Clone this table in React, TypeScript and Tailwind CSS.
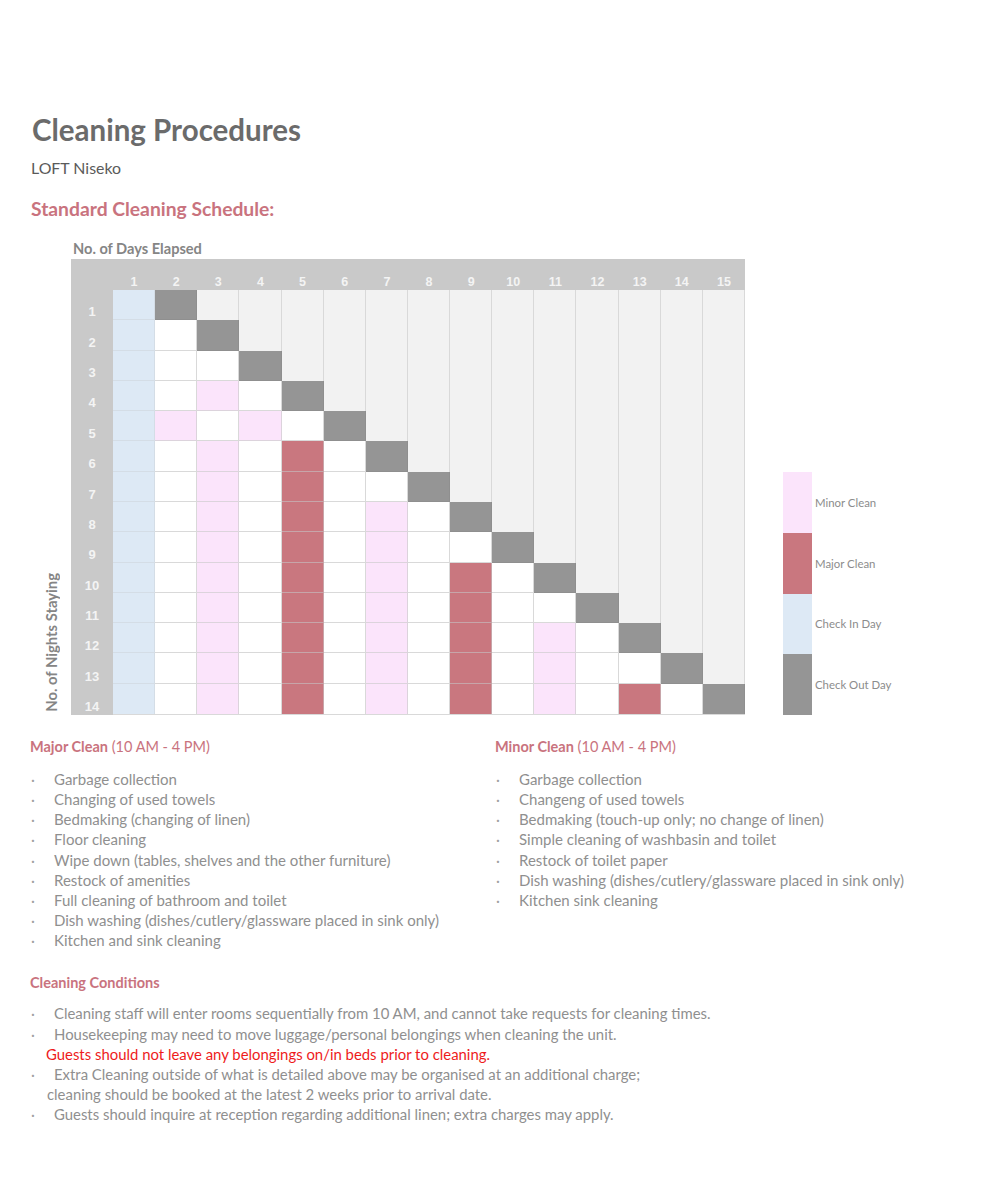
import React from "react";

type Kind = "blue" | "out" | "empty" | "white" | "pink" | "major";

const kindOf = (r: number, c: number): Kind => {
  if (c === 1) return "blue";
  if (c === r + 1) return "out";
  if (c > r + 1) return "empty";
  if (r === 5) {
    if (c === 2 || c === 4) return "pink";
    if (c === 3) return "white";
  }
  if (c === 3 && r >= 4) return "pink";
  if (c === 7 && r >= 8) return "pink";
  if (c === 11 && r >= 12) return "pink";
  if (c === 5 && r >= 6) return "major";
  if (c === 9 && r >= 10) return "major";
  if (c === 13 && r >= 14) return "major";
  return "white";
};

const cellClass: Record<Kind, string> = {
  blue: "bg-[#dde9f5] border-r border-b border-[#d4dde6]",
  out: "bg-[#959595] border-r border-b border-[#8f8f8f]",
  empty: "bg-[#f2f2f2] border-r border-[#d9d9d9]",
  white: "bg-white border-r border-b border-[#d9d9d9]",
  pink: "bg-[#fbe4fb] border-r border-b border-[#dcd3dc]",
  major: "bg-[#c9777f] border-r border-b border-[#c7a5a9]",
};

const rows = Array.from({ length: 14 }, (_, i) => i + 1);
const cols = Array.from({ length: 15 }, (_, i) => i + 1);

const majorItems = [
  "Garbage collection",
  "Changing of used towels",
  "Bedmaking (changing of linen)",
  "Floor cleaning",
  "Wipe down (tables, shelves and the other furniture)",
  "Restock of amenities",
  "Full cleaning of bathroom and toilet",
  "Dish washing (dishes/cutlery/glassware placed in sink only)",
  "Kitchen and sink cleaning",
];

const minorItems = [
  "Garbage collection",
  "Changeng of used towels",
  "Bedmaking (touch-up only; no change of linen)",
  "Simple cleaning of washbasin and toilet",
  "Restock of toilet paper",
  "Dish washing (dishes/cutlery/glassware placed in sink only)",
  "Kitchen sink cleaning",
];

function Bullet({ children }: { children: React.ReactNode }) {
  return (
    <div className="flex">
      <span className="w-[24px] shrink-0 pl-[1px] text-[#a0a0a0]">·</span>
      <span className="whitespace-nowrap">{children}</span>
    </div>
  );
}

function CleanList({ title, items }: { title: string; items: string[] }) {
  return (
    <div className="flex flex-col">
      <div className="text-[14.5px] leading-[20px] text-[#c9737e]">
        <span className="font-bold">{title}</span> (10 AM - 4 PM)
      </div>
      <div className="mt-[12px] flex flex-col text-[15px] leading-[20.15px] text-[#8f8f8f]">
        {items.map((t, i) => (
          <Bullet key={i}>{t}</Bullet>
        ))}
      </div>
    </div>
  );
}

export default function App() {
  const legend = [
    { label: "Minor Clean", cls: "bg-[#fbe4fb]" },
    { label: "Major Clean", cls: "bg-[#c9777f]" },
    { label: "Check In Day", cls: "bg-[#dde9f5]" },
    { label: "Check Out Day", cls: "bg-[#959595]" },
  ];

  return (
    <div className="w-[984px] min-h-[1200px] bg-white pl-[30px] pt-[112px] font-['Lato','Noto_Sans',sans-serif]">
      <h1 className="text-[29.5px] leading-[36px] font-bold text-[#6b6b6b] pl-[2px]">
        Cleaning Procedures
      </h1>
      <div className="mt-[8px] text-[15.9px] leading-[24px] text-[#5a5a5a] pl-[1px]">LOFT Niseko</div>
      <div className="mt-[16px] text-[19.3px] leading-[26px] font-bold text-[#c9737e] pl-[1px]">
        Standard Cleaning Schedule:
      </div>

      {/* Chart */}
      <div className="mt-[18px] flex">
        <div className="w-[41px] flex flex-col justify-end items-center pb-[3px]">
          <span className="[writing-mode:vertical-rl] rotate-180 text-[14.8px] leading-[16px] font-bold text-[#858585]">
            No. of Nights Staying
          </span>
        </div>
        <div className="flex flex-col">
          <div className="pl-[2px] text-[14.6px] leading-[18px] font-bold text-[#858585] whitespace-nowrap">
            No. of Days Elapsed
          </div>
          <div className="mt-[1px] w-[674px] bg-[#c9c9c9] flex flex-col font-['Liberation_Sans','Arial',sans-serif]">
            <div className="h-[31px] flex">
              <div className="w-[42px]" />
              <div className="w-[632px] grid grid-cols-15">
                {cols.map((c) => (
                  <div
                    key={c}
                    className="flex items-end justify-center pb-[1px] text-[12.5px] leading-[14px] font-bold text-[#f4f4f4]"
                  >
                    {c}
                  </div>
                ))}
              </div>
            </div>
            <div className="flex">
              <div className="w-[42px] grid grid-rows-14 h-[425px]">
                {rows.map((r) => (
                  <div
                    key={r}
                    className="flex items-end justify-center pb-[1px] text-[13px] leading-[14px] font-bold text-[#f4f4f4]"
                  >
                    {r}
                  </div>
                ))}
              </div>
              <div className="w-[632px] h-[425px] grid grid-cols-15 grid-rows-14 border-b border-[#d9d9d9]">
                {rows.map((r) =>
                  cols.map((c) => {
                    const k = kindOf(r, c);
                    const last = r === 14 ? " border-b-0" : "";
                    return <div key={`${r}-${c}`} className={cellClass[k] + last} />;
                  })
                )}
              </div>
            </div>
          </div>
        </div>
        <div className="ml-[38px] self-end flex flex-col">
          {legend.map((l) => (
            <div key={l.label} className="flex items-center h-[60.75px]">
              <div className={`w-[29px] h-full ${l.cls}`} />
              <span className="ml-[3px] text-[11.4px] text-[#8c8c8c] whitespace-nowrap">{l.label}</span>
            </div>
          ))}
        </div>
      </div>

      {/* Lists */}
      <div className="mt-[22px] flex">
        <div className="w-[465px]">
          <CleanList title="Major Clean" items={majorItems} />
        </div>
        <div>
          <CleanList title="Minor Clean" items={minorItems} />
        </div>
      </div>

      {/* Conditions */}
      <div className="mt-[23px] text-[14.5px] leading-[20px] font-bold text-[#c9737e]">Cleaning Conditions</div>
      <div className="mt-[10px] flex flex-col text-[14.9px] leading-[20.2px] text-[#8f8f8f]">
        <Bullet>Cleaning staff will enter rooms sequentially from 10 AM, and cannot take requests for cleaning times.</Bullet>
        <Bullet>Housekeeping may need to move luggage/personal belongings when cleaning the unit.</Bullet>
        <div className="pl-[16px] text-[#ee1b1b] whitespace-nowrap">Guests should not leave any belongings on/in beds prior to cleaning.</div>
        <Bullet>Extra Cleaning outside of what is detailed above may be organised at an additional charge;</Bullet>
        <div className="pl-[17px] whitespace-nowrap">cleaning should be booked at the latest 2 weeks prior to arrival date.</div>
        <Bullet>Guests should inquire at reception regarding additional linen; extra charges may apply.</Bullet>
      </div>
    </div>
  );
}
